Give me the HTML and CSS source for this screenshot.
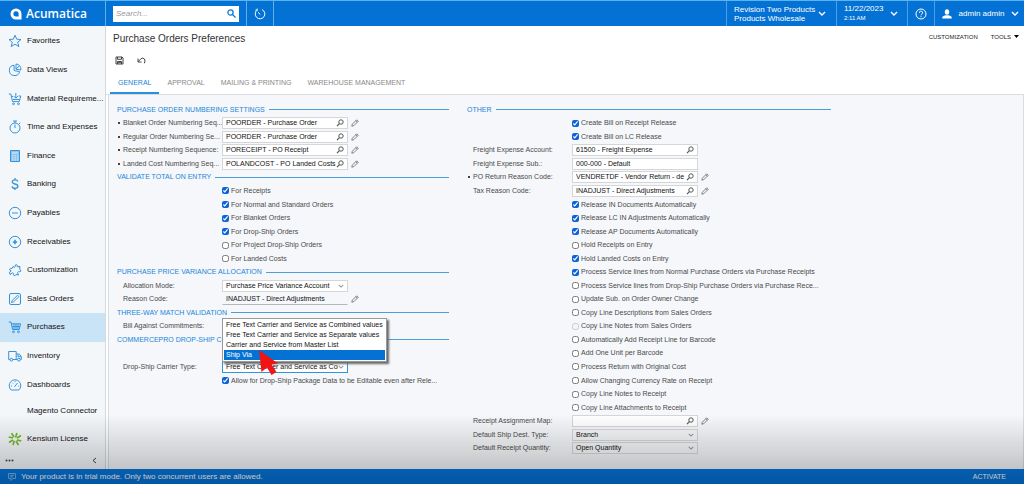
FILE: index.html
```
<!DOCTYPE html>
<html lang="en">
<head>
<meta charset="utf-8">
<title>Purchase Orders Preferences</title>
<link rel="stylesheet" href="styles.css">
</head>
<body>
<svg class="defs" aria-hidden="true">
  <symbol id="lens" viewBox="0 0 8 8"><circle cx="5" cy="3" r="2.2" fill="none" stroke="currentColor"/><path d="M3.4 4.7 1 7.2" stroke="currentColor" stroke-width="1.2"/></symbol>
  <symbol id="pencil" viewBox="0 0 8 8"><path d="M.8 7.2 1.3 5.200 5.700.8 7.200 2.300 2.800 6.700Z M4.800 1.700 6.300 3.200" fill="none" stroke="currentColor" stroke-width=".8"/></symbol>
  <symbol id="chev" viewBox="0 0 8 5"><path d="M1 1 4 4 7 1" fill="none" stroke="currentColor" stroke-width="1.400"/></symbol>
</svg>
<header class="top">
  <a class="brand" href="#"><svg width="12" height="12" viewBox="0 0 12 12"><path fill="#fff" fill-rule="evenodd" d="M6 .5A5.500 5.500 0 0 1 11.500 6V11.500H6A5.500 5.500 0 0 1 6 .5ZM6 3.200A2.600 2.600 0 1 0 6 8.400H8.600V5.800A2.600 2.600 0 0 0 6 3.200Z"/></svg><span>Acumatica</span></a>
  <div class="searchwrap"><label class="search"><input type="search" placeholder="Search..." aria-label="Search"><svg width="9" height="9" viewBox="0 0 9 9" fill="none" stroke="#0b7bdc" stroke-width="1.300"><circle cx="3.500" cy="3.500" r="2.600"/><path d="M5.500 5.500 8.500 8.500"/></svg></label></div>
  <button class="cell recent" aria-label="Recent"><svg width="12" height="12" viewBox="0 0 12 12" fill="none" stroke="#fff"><path d="M3.200 2.100A4.800 4.800 0 1 0 8 1.600M3.200 2.200V.6M3.200 2.200H1.400M6.300 6.500 4 4.300"/></svg></button>
  <span class="grow"></span>
  <button class="cell company"><span>Revision Two Products<br>Products Wholesale</span><svg width="8" height="5"><use href="#chev"/></svg></button>
  <button class="cell date"><span>11/22/2023<br><small>2:11 AM</small></span><svg width="8" height="5"><use href="#chev"/></svg></button>
  <button class="cell help" aria-label="Help"><svg width="12" height="12" viewBox="0 0 12 12" fill="none" stroke="#fff"><circle cx="6" cy="6" r="5"/><path d="M4.400 4.800A1.600 1.600 0 1 1 6.800 6.100Q6 6.500 6 7.300M6 8.200V9.200"/></svg></button>
  <button class="cell user"><svg width="10" height="10" viewBox="0 0 10 10" fill="#fff"><ellipse cx="5" cy="3" rx="2.200" ry="2.800"/><path d="M.3 9.500V8Q1 6.700 3.500 6.300H6.500Q9 6.700 9.700 8V9.500Z"/></svg><span>admin admin</span><svg width="8" height="5"><use href="#chev"/></svg></button>
</header>
<div class="body">
  <nav class="side">
    <a href="#"><svg viewBox="0 0 14 14"><path d="M7 1.200 8.700 5.200 13 5.500 9.700 8.300 10.800 12.600 7 10.200 3.200 12.600 4.300 8.300 1 5.500 5.300 5.200Z"/></svg><span>Favorites</span></a>
    <a href="#"><svg viewBox="0 0 14 14"><path d="M6 2.200A5.200 5.200 0 1 0 11.600 8.600L6.200 7.600ZM8 1V6.200L12.800 7A5 5 0 0 0 8 1ZM8 6 11.500 2.800"/></svg><span>Data Views</span></a>
    <a href="#"><svg viewBox="0 0 14 14"><path d="M.8 2H2.800L4.600 9.600H11.200L12.800 4H10.500M3.400 4.400H5M5 7.500H11.500M7.800 1V6M5.800 4.200 7.800 6.200 9.800 4.200"/><circle cx="5.500" cy="11.800" r=".9"/><circle cx="10.500" cy="11.800" r=".9"/></svg><span>Material Requireme...</span></a>
    <a href="#"><svg viewBox="0 0 14 14"><circle cx="7" cy="8" r="5"/><path d="M7 8V4.500M7 3V1M5 1H9M11 4 12.300 2.700"/></svg><span>Time and Expenses</span></a>
    <a href="#"><svg viewBox="0 0 14 14"><path fill="#8fc3ec" d="M2.500 1.500H11.500V12.500H2.500Z"/><path stroke="#d9ebf9" d="M4 4H10M4 6.800H5.500M6.500 6.800H8M9 6.800H10.500M4 9H5.500M6.500 9H8M9 9H10.500M4 11H5.500M6.500 11H8M9 11H10.500"/></svg><span>Finance</span></a>
    <a href="#"><svg viewBox="0 0 14 14"><path stroke-width="1.300" d="M9.800 4.500Q9.500 2.800 7 2.800 4.300 2.800 4.300 4.800 4.300 6.400 7 7 9.900 7.600 9.900 9.300 9.900 11.300 7 11.300 4.300 11.300 4 9.300M7 1V2.800M7 11.300V13"/></svg><span>Banking</span></a>
    <a href="#"><svg viewBox="0 0 14 14"><circle cx="7" cy="7" r="5.700"/><path d="M4 7H10"/></svg><span>Payables</span></a>
    <a href="#"><svg viewBox="0 0 14 14"><circle cx="7" cy="7" r="5.700"/><path stroke-width="1.600" d="M4.800 7H9.200M7 4.800V9.200"/></svg><span>Receivables</span></a>
    <a href="#"><svg viewBox="0 0 14 14"><path d="M5 3.500 6.500 4.500Q7.500 4 7 3 7.200 1.300 8.800 1.800 9.800 2.500 9.200 3.800L12 3.500 11.600 6.200Q13.200 6.800 12.800 8.200 12 9.200 10.700 8.500L9.500 9.500 10.500 12 8 11.500Q7.500 13 6 12.600 5 11.800 5.700 10.500L4.500 9.800 2 11.500 1.500 9 3.200 7.800Q1.500 7.500 1.600 6 2.500 4.800 4 5.600Z"/></svg><span>Customization</span></a>
    <a href="#"><svg viewBox="0 0 14 14"><rect x="1.500" y="1.500" width="11" height="11" rx="1.500"/><path d="M3.500 10.500 4.200 8.500 9.600 3.200 11 4.600 5.600 9.800Z"/></svg><span>Sales Orders</span></a>
    <a href="#" class="active" aria-current="page"><svg viewBox="0 0 14 14"><path d="M.8 2H3L4.600 9.500H11.200L12.600 3.800H3.500M4.200 6.600H12M6 4V9M8 4V9M10 4V9"/><circle cx="5.500" cy="11.800" r=".9"/><circle cx="10.500" cy="11.800" r=".9"/></svg><span>Purchases</span></a>
    <a href="#"><svg viewBox="0 0 14 14"><path d="M2 10.500H.7V2.500H8.200V10.500H4.800M8.200 5H11.200L13.300 7.500V10.500H12.300M9.500 10.500H8.200M10 5.500V7.700H13"/><circle cx="3.400" cy="10.700" r="1.400"/><circle cx="10.900" cy="10.700" r="1.400"/></svg><span>Inventory</span></a>
    <a href="#"><svg viewBox="0 0 14 14"><path d="M3.200 12A5.800 5.800 0 1 1 10.800 12ZM6.500 8.800 9.500 5M3 8H4M4.200 4.800 4.900 5.500M7 3.200V4.200M10.200 8H11"/></svg><span>Dashboards</span></a>
    <a href="#" class="short"><span>Magento Connector</span></a>
    <a href="#" class="kensium"><svg viewBox="0 0 14 14"><path stroke="#76b82a" stroke-width="1.700" d="M7.500 5.500 9 1M9 6 13 3.500M9 8 13.300 9M8 9 10.500 13M6.300 8.800 5 13M5 8 1 10.500M5 6 .7 5M6 5 3.500 1.200"/></svg><span>Kensium License</span></a>
    <div class="sidefoot"><button aria-label="More items"><svg width="9" height="3" fill="#444"><circle cx="1.500" cy="1.500" r="1"/><circle cx="4.500" cy="1.500" r="1"/><circle cx="7.500" cy="1.500" r="1"/></svg></button><button aria-label="Collapse"><svg width="5" height="7" fill="none" stroke="#444"><path d="M4 1 1 3.500 4 6"/></svg></button></div>
  </nav>
  <main>
    <div class="titlebar"><h1>Purchase Orders Preferences</h1><div class="links"><button>CUSTOMIZATION</button><button>TOOLS <svg width="5" height="3"><path d="M0 0H5L2.500 3Z"/></svg></button></div></div>
    <div class="toolbar">
      <button aria-label="Save"><svg width="9" height="9" viewBox="0 0 9 9" fill="none" stroke="#444"><path d="M1 1H7L8 2V8H1ZM2.500 1V3.300H6.500V1M2.500 8V5.500H6.500V8M3 6.700H6"/></svg></button>
      <button aria-label="Undo"><svg width="9" height="9" viewBox="0 0 9 9" fill="none" stroke="#444"><path d="M1 2.500V6H4.500M1.200 5.700 4 2.700Q6 1.300 7.500 3 8.600 4.800 7.300 7.300"/></svg></button>
    </div>
    <div class="tabs" role="tablist"><button role="tab" aria-selected="true">GENERAL</button><button role="tab">APPROVAL</button><button role="tab">MAILING &amp; PRINTING</button><button role="tab">WAREHOUSE MANAGEMENT</button></div>
    <form class="panel">
      <div class="col">
        <h2>PURCHASE ORDER NUMBERING SETTINGS</h2>
        <div class="row req"><label for="f1">Blanket Order Numbering Seq...</label><span class="field"><input id="f1" value="POORDER - Purchase Order"><svg><use href="#lens"/></svg></span><svg class="edit"><use href="#pencil"/></svg></div>
        <div class="row req"><label for="f2">Regular Order Numbering Se...</label><span class="field"><input id="f2" value="POORDER - Purchase Order"><svg><use href="#lens"/></svg></span><svg class="edit"><use href="#pencil"/></svg></div>
        <div class="row req"><label for="f3">Receipt Numbering Sequence:</label><span class="field"><input id="f3" value="PORECEIPT - PO Receipt"><svg><use href="#lens"/></svg></span><svg class="edit"><use href="#pencil"/></svg></div>
        <div class="row req"><label for="f4">Landed Cost Numbering Seq...</label><span class="field"><input id="f4" value="POLANDCOST - PO Landed Costs"><svg><use href="#lens"/></svg></span><svg class="edit"><use href="#pencil"/></svg></div>
        <h2>VALIDATE TOTAL ON ENTRY</h2>
        <label class="check"><input type="checkbox" checked><span>For Receipts</span></label>
        <label class="check"><input type="checkbox" checked><span>For Normal and Standard Orders</span></label>
        <label class="check"><input type="checkbox" checked><span>For Blanket Orders</span></label>
        <label class="check"><input type="checkbox" checked><span>For Drop-Ship Orders</span></label>
        <label class="check"><input type="checkbox"><span>For Project Drop-Ship Orders</span></label>
        <label class="check"><input type="checkbox"><span>For Landed Costs</span></label>
        <h2>PURCHASE PRICE VARIANCE ALLOCATION</h2>
        <div class="row"><label for="f5">Allocation Mode:</label><span class="field"><select id="f5"><option>Purchase Price Variance Account</option></select><svg class="arrow"><use href="#chev"/></svg></span></div>
        <div class="row"><label for="f6">Reason Code:</label><span class="field flat"><input id="f6" value="INADJUST - Direct Adjustments" readonly></span><svg class="edit"><use href="#pencil"/></svg></div>
        <h2>THREE-WAY MATCH VALIDATION</h2>
        <div class="row"><span class="label">Bill Against Commitments:</span></div>
        <h2>COMMERCEPRO DROP-SHIP C</h2>
        <div class="row blank"></div>
        <div class="row"><label for="f7">Drop-Ship Carrier Type:</label><span class="field open"><select id="f7"><option>Free Text Carrier and Service as Combined values</option></select><svg class="arrow"><use href="#chev"/></svg>
          <ul class="menu" role="listbox"><li role="option">Free Text Carrier and Service as Combined values</li><li role="option">Free Text Carrier and Service as Separate values</li><li role="option">Carrier and Service from Master List</li><li role="option" aria-selected="true">Ship Via</li></ul>
          <svg class="pointer" viewBox="0 0 20 25"><path fill="#f01414" d="M1 0 20 13.500 13.500 14.500 18.500 22 13.500 25 9 17.500 3.500 22Z"/></svg></span></div>
        <label class="check"><input type="checkbox" checked><span>Allow for Drop-Ship Package Data to be Editable even after Rele...</span></label>
      </div>
      <div class="col wide">
        <h2>OTHER</h2>
        <label class="check"><input type="checkbox" checked><span>Create Bill on Receipt Release</span></label>
        <label class="check"><input type="checkbox" checked><span>Create Bill on LC Release</span></label>
        <div class="row"><label for="g1">Freight Expense Account:</label><span class="field"><input id="g1" value="61500 - Freight Expense"><svg><use href="#lens"/></svg></span></div>
        <div class="row"><label for="g2">Freight Expense Sub.:</label><span class="field"><input id="g2" value="000-000 - Default"></span></div>
        <div class="row req"><label for="g3">PO Return Reason Code:</label><span class="field"><input id="g3" value="VENDRETDF - Vendor Return - de"><svg><use href="#lens"/></svg></span><svg class="edit"><use href="#pencil"/></svg></div>
        <div class="row"><label for="g4">Tax Reason Code:</label><span class="field"><input id="g4" value="INADJUST - Direct Adjustments"><svg><use href="#lens"/></svg></span><svg class="edit"><use href="#pencil"/></svg></div>
        <label class="check"><input type="checkbox" checked><span>Release IN Documents Automatically</span></label>
        <label class="check"><input type="checkbox" checked><span>Release LC IN Adjustments Automatically</span></label>
        <label class="check"><input type="checkbox" checked><span>Release AP Documents Automatically</span></label>
        <label class="check"><input type="checkbox"><span>Hold Receipts on Entry</span></label>
        <label class="check"><input type="checkbox" checked><span>Hold Landed Costs on Entry</span></label>
        <label class="check"><input type="checkbox" checked><span>Process Service lines from Normal Purchase Orders via Purchase Receipts</span></label>
        <label class="check"><input type="checkbox"><span>Process Service lines from Drop-Ship Purchase Orders via Purchase Rece...</span></label>
        <label class="check"><input type="checkbox"><span>Update Sub. on Order Owner Change</span></label>
        <label class="check"><input type="checkbox"><span>Copy Line Descriptions from Sales Orders</span></label>
        <label class="check"><input type="checkbox" disabled><span>Copy Line Notes from Sales Orders</span></label>
        <label class="check"><input type="checkbox"><span>Automatically Add Receipt Line for Barcode</span></label>
        <label class="check"><input type="checkbox"><span>Add One Unit per Barcode</span></label>
        <label class="check"><input type="checkbox"><span>Process Return with Original Cost</span></label>
        <label class="check"><input type="checkbox"><span>Allow Changing Currency Rate on Receipt</span></label>
        <label class="check"><input type="checkbox"><span>Copy Line Notes to Receipt</span></label>
        <label class="check"><input type="checkbox"><span>Copy Line Attachments to Receipt</span></label>
        <div class="row"><label for="g5">Receipt Assignment Map:</label><span class="field"><input id="g5"><svg><use href="#lens"/></svg></span><svg class="edit"><use href="#pencil"/></svg></div>
        <div class="row"><label for="g6">Default Ship Dest. Type:</label><span class="field dim"><select id="g6"><option>Branch</option></select><svg class="arrow"><use href="#chev"/></svg></span></div>
        <div class="row"><label for="g7">Default Receipt Quantity:</label><span class="field dim"><select id="g7"><option>Open Quantity</option></select><svg class="arrow"><use href="#chev"/></svg></span></div>
      </div>
    </form>
  </main>
</div>
<footer><svg width="8" height="8" viewBox="0 0 8 8" fill="none" stroke="#6fb4ee"><path d="M.5.5H7.500V5.500H4.500L3 7.500V5.500H.5ZM2 2.300H6M2 3.900H5"/></svg><span>Your product is in trial mode. Only two concurrent users are allowed.</span><button>ACTIVATE</button></footer>
<div class="shade"></div>
</body>
</html>
```

FILE: styles.css
```
* { box-sizing: border-box; }
body { margin: 0; min-height: 100vh; display: flex; flex-direction: column; font: 7px/10px "Liberation Sans", Arial, sans-serif; color: #4a4a4a; background: #fff; }
button, input, select { font: inherit; color: inherit; border: 0; padding: 0; margin: 0; background: none; border-radius: 0; min-width: 0; }
svg { flex: none; }
.defs { position: absolute; width: 0; height: 0; }
a { text-decoration: none; color: inherit; }

.top { display: flex; height: 26px; flex: none; background: #0472d4; border-top: 1px solid #5cb3f2; color: #fff; font-size: 8px; }
.brand { display: flex; align-items: center; gap: 4px; width: 106px; padding-left: 10px; border-right: 1px solid #62aeea; font: 600 12px/16px "Open Sans", sans-serif; }
.searchwrap { display: flex; align-items: center; width: 141px; padding: 0 7px; border-right: 1px solid #62aeea; }
.search { display: flex; flex: 1; align-items: center; height: 16px; padding: 0 3px; background: #fff; }
.search input { flex: 1; outline: 0; color: #333; }
.search input::placeholder { color: #999; font-style: italic; }
.cell { display: flex; align-items: center; text-align: left; line-height: 9px; color: #fff; border-left: 1px solid #4ba1e6; }
.recent { width: 27px; justify-content: center; border-left: 0; border-right: 1px solid #62aeea; }
.grow { flex: 1; }
.company { width: 110px; padding-left: 7px; gap: 3px; }
.date { width: 71px; padding: 0 9px 0 7px; justify-content: space-between; }
.date small { font-size: 6px; }
.help { width: 27px; justify-content: center; }
.user { width: 90px; padding: 0 5px 0 7px; justify-content: space-between; }

.body { display: flex; flex: 1; }
.side { display: flex; flex-direction: column; width: 106px; padding-top: 1px; flex: none; background: #f4f7fa; border-right: 1px solid #d5d9dd; font-size: 8px; color: #111; }
.side a { display: flex; flex: 1; align-items: center; gap: 5px; padding: 0 2px 0 8px; white-space: nowrap; }
.side a svg { width: 14px; height: 14px; fill: none; stroke: #3593dc; }
.side a.active { background: #c9e3f7; }
.side a.short { flex: none; height: 24px; padding-left: 27px; }
.side a.kensium { flex: none; height: 32px; }
.sidefoot { display: flex; justify-content: space-between; align-items: center; height: 14px; padding: 0 8px 2px 5px; }
.sidefoot button { display: flex; }

main { display: flex; flex: 1; flex-direction: column; min-width: 0; }
.titlebar { display: flex; justify-content: space-between; align-items: center; height: 26px; padding: 0 5px 0 7px; }
h1 { margin: 0; font-size: 10px; line-height: 14px; font-weight: 400; color: #333; }
.links { display: flex; gap: 13px; padding-bottom: 5px; font-size: 6px; color: #222; }
.links button { display: flex; align-items: center; gap: 3px; }
.toolbar { display: flex; gap: 13px; padding: 0 9px; height: 20px; }
.toolbar button { display: flex; align-items: center; padding-bottom: 4px; }
.tabs { display: flex; flex: none; height: 23px; padding-left: 4px; border-bottom: 1px solid #d9dddf; color: #888; }
.tabs button { padding: 2px 8px 0; border-bottom: 2px solid transparent; }
.tabs button[aria-selected] { color: #1a86d9; border-color: #2b8fdc; }
.panel { display: flex; flex: 1; gap: 18px; padding: 8px 8px 14px; margin-left: 2px; background: #f5f7fa; border-left: 1px solid #d9dddf; border-right: 1px solid #d9dddf; }
.col { display: grid; grid-template-rows: repeat(26, minmax(0, 1fr)); flex: 0 1 332px; min-width: 0; }
.col.wide { flex-basis: 364px; }
h2 { display: flex; align-items: center; gap: 4px; margin: 0; font-size: 7px; font-weight: 400; color: #1a86d9; white-space: nowrap; }
h2::after { content: ""; flex: 1; height: 1px; background: #4a9fd8; }
.row { display: flex; align-items: center; padding-left: 6px; }
.row label, .row .label { width: 99px; white-space: nowrap; flex: none; }
.req { padding-left: 0; }
.req::before { content: ""; width: 2px; height: 2px; margin: 0 3px 0 1px; background: #444; }
.field { position: relative; display: flex; align-items: center; width: 126px; height: 12px; padding: 0 4px 0 3px; background: #fff; border: 1px solid #d4d6d8; color: #111; }
.field input, .field select { flex: 1; width: 0; height: 10px; outline: 0; }
.field select { appearance: none; overflow: hidden; }
.field > svg { width: 8px; height: 8px; margin-right: -1px; color: #555; }
.field > .arrow { width: 6px; height: 4px; color: #999; }
.field.flat { background: none; border-color: transparent transparent #b5b8ba; }
.field.dim { background: #f5f7f9; }
.field.open { border-color: #3593dc; }
.edit { width: 8px; height: 8px; margin-left: 3px; color: #666; }
.check { display: flex; align-items: center; gap: 2px; padding-left: 105px; white-space: nowrap; }
.check input { width: 7px; height: 7px; flex: none; accent-color: #0a63d8; }
.menu { position: absolute; z-index: 2; left: -1px; bottom: 100%; margin: 0; padding: 1px; list-style: none; background: #fff; border: 1px solid #999; box-shadow: 2px 2px 2px #666; white-space: nowrap; width: 165px; }
.menu li { padding: 0 2px; }
.menu li[aria-selected] { background: #0472d4; color: #fff; }
.field > .pointer { position: absolute; z-index: 3; left: 35px; bottom: -3px; width: 20px; height: 25px; }

footer { display: flex; align-items: center; flex: none; height: 15px; padding: 0 18px 0 8px; gap: 5px; background: #0676dc; color: #fff; font-size: 8px; }
footer button { margin-left: auto; font-size: 7px; }
.shade { position: fixed; left: 0; right: 0; bottom: 0; height: 70px; pointer-events: none; z-index: 5; background: linear-gradient(rgba(0,0,0,0), rgba(0,0,0,.26)); }
```
